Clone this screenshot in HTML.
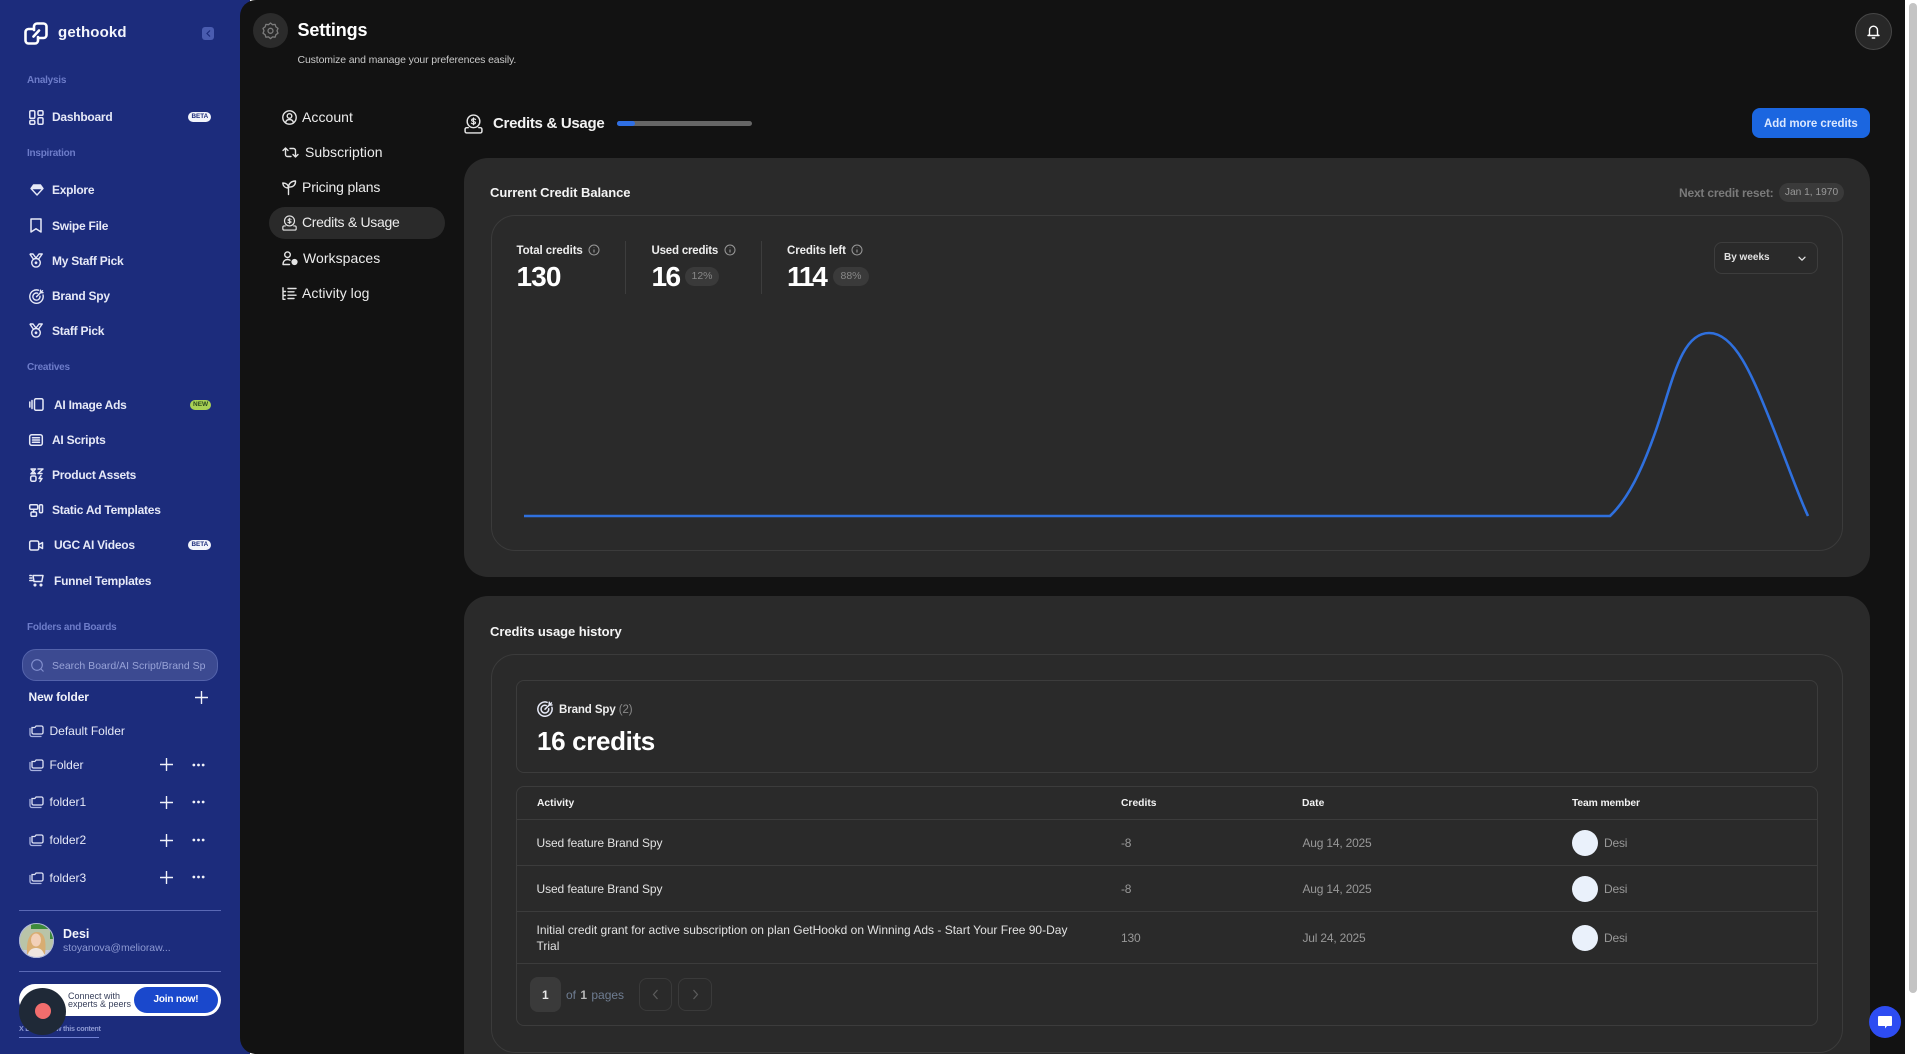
<!DOCTYPE html>
<html><head><meta charset="utf-8"><title>Settings</title>
<style>
html,body{margin:0;padding:0;width:1920px;height:1054px;overflow:hidden;background:#fff;font-family:"Liberation Sans",sans-serif}
#root{position:relative;width:1920px;height:1054px;overflow:hidden}
.a{position:absolute;box-sizing:border-box}
.t{position:absolute;line-height:0;white-space:nowrap;height:0}
.s{color:#e6e9f7;font-weight:700;font-size:12px;letter-spacing:-.25px;left:52px}
.h{color:#6d7cc9;font-weight:700;font-size:10px;letter-spacing:-.25px;left:27px}
.f{color:#e6e9f7;font-size:12px;left:49.500px}
.n{color:#ececec;font-size:14px;letter-spacing:.05px}
.lb{color:#eee;font-weight:700;font-size:11.500px;letter-spacing:-.1px}
.big{color:#fff;font-weight:700;font-size:28px}
.pill{background:#3a3a3a;border-radius:10px;color:#888;font-size:10.500px;text-align:center;line-height:19px;height:19px;top:267px}
.th{color:#f2f2f2;font-weight:700;font-size:10.300px}
.td{color:#e2e2e2;font-size:12px}
.m{color:#989898;font-size:12px;letter-spacing:-.2px}
.av{width:26px;height:26px;border-radius:50%;background:#eaf1fb;left:1572px}
.ln{height:1px;background:#3c3c3c;left:516px;width:1302px}
svg{position:absolute;overflow:visible;fill:none}
.w{stroke:#e6e9f7;stroke-width:1.500;stroke-linecap:round;stroke-linejoin:round}
.d{stroke:#e4e4e4;stroke-width:1.400;stroke-linecap:round;stroke-linejoin:round}
</style></head><body><div id="root">
<svg width="0" height="0"><defs>
<symbol id="folder" viewBox="0 0 15 14" overflow="visible"><path d="M3 3.500h2.800l1.300-1.500h5.400a1.500 1.500 0 0 1 1.500 1.500v5a1.500 1.500 0 0 1-1.500 1.500H4.500A1.500 1.500 0 0 1 3 8.500z" stroke="#dfe3f5" stroke-width="1.300" fill="none"/><path d="M1 4.500v6a2 2 0 0 0 2 2h9" stroke="#a9b3e0" stroke-width="1.300" fill="none" stroke-linecap="round"/></symbol>
<symbol id="plus" viewBox="0 0 14 14"><path d="M7 .5v13M.5 7h13" stroke="#f0f2fa" stroke-width="1.500" stroke-linecap="round"/></symbol>
<symbol id="dots" viewBox="0 0 14 4"><circle cx="2" cy="2" r="1.500" fill="#f0f2fa"/><circle cx="7" cy="2" r="1.500" fill="#f0f2fa"/><circle cx="12" cy="2" r="1.500" fill="#f0f2fa"/></symbol>
<symbol id="medal" viewBox="0 0 14 15"><g stroke="#e6e9f7" stroke-width="1.400" fill="none" stroke-linejoin="round"><path d="M.8 1h3.200l3 4 3-4h3.200l-3.500 5"/><path d="M.8 1l3.500 5"/><circle cx="7" cy="9.800" r="4.300"/></g><circle cx="7" cy="9.800" r="1.400" fill="#e6e9f7"/></symbol>
<symbol id="target" viewBox="0 0 15 15"><g stroke="#e6e9f7" stroke-width="1.400" fill="none" stroke-linecap="round"><path d="M9.500 1.200A6.700 6.700 0 1 0 14 6"/><path d="M8.600 4.200A3.600 3.600 0 1 0 11 7.200"/><path d="M7.500 7.700L13.500 1.800"/><path d="M11.500 1.200v2.500h2.500"/></g></symbol>
<symbol id="info" viewBox="0 0 12 12"><circle cx="6" cy="6" r="5" stroke="#999" fill="none"/><path d="M6 5.500v3M6 3.400v.4" stroke="#999" stroke-width="1.100"/></symbol>
<symbol id="coin" viewBox="0 0 18 19"><g stroke="currentColor" stroke-width="1.400" fill="none" stroke-linecap="round" stroke-linejoin="round"><circle cx="9" cy="7" r="6"/><path d="M4 13H2.500A1.500 1.500 0 0 0 1 14.500v2A1.500 1.500 0 0 0 2.500 18h13a1.500 1.500 0 0 0 1.500-1.500v-2A1.500 1.500 0 0 0 15.500 13H14"/><path d="M11 5.200C10.500 4.500 7.300 4.200 7.200 5.800 7.100 7.400 10.900 6.700 10.900 8.300 10.900 9.800 7.600 9.500 7 8.700M9 3.700v6.600" stroke-width="1.100"/></g></symbol>
</defs></svg>

<!-- sidebar -->
<div class="a" style="left:0;top:0;width:250px;height:1054px;background:#1c2c7c"></div>
<svg style="left:24px;top:22px" width="24" height="23" viewBox="0 0 24 23"><g stroke="#fff" stroke-width="2.600" stroke-linecap="round" stroke-linejoin="round"><path d="M9 7H4.500A3 3 0 0 0 1.500 10v8.500a3 3 0 0 0 3 3H11a3 3 0 0 0 3-3V15"/><path d="M15 16h4.500a3 3 0 0 0 3-3V4.500a3 3 0 0 0-3-3H13a3 3 0 0 0-3 3V8"/><path d="M9.500 14.500L15 8.500"/></g></svg>
<div class="t" style="left:58px;top:33px;color:#f3f5fc;font-weight:700;font-size:15px;letter-spacing:.15px">gethookd</div>
<div class="a" style="left:202px;top:27px;width:12px;height:13px;background:#4a5cb0;border-radius:3px"></div>
<svg style="left:204px;top:29px" width="8" height="9"><path d="M6 1.500L3 4.500l3 3" stroke="#1c2c7c" stroke-width="1.200"/></svg>

<div class="t h" style="top:81px">Analysis</div>
<svg class="w" style="left:29px;top:110px" width="15" height="15" viewBox="0 0 15 15"><rect x=".8" y=".8" width="5" height="7.500" rx="1.200"/><rect x="9" y=".8" width="5" height="4.500" rx="1.200"/><rect x=".8" y="10.500" width="5" height="3.700" rx="1.200"/><rect x="9" y="7.800" width="5" height="6.400" rx="1.200"/></svg>
<div class="t s" style="top:117px">Dashboard</div>
<div class="a" style="left:188px;top:112px;width:23px;height:10px;background:#f2f4fb;border-radius:5px"></div>
<div class="t" style="left:191.500px;top:117px;color:#1c2c7c;font-size:6.300px;font-weight:700">BETA</div>

<div class="t h" style="top:154px">Inspiration</div>
<svg class="w" style="left:30px;top:184px" width="14" height="12" viewBox="0 0 14 12"><path d="M3.500 1h7L13 4.500 7 11 1 4.500zM1.500 4.500h11" stroke-width="1.400"/><path d="M3.500 1h7L12.500 4H1.500z" fill="#e6e9f7" stroke="none"/></svg>
<div class="t s" style="top:190px">Explore</div>
<svg class="w" style="left:30px;top:218px" width="12" height="15" viewBox="0 0 12 15"><path d="M1 1h10v13L6 10.800 1 14z"/></svg>
<div class="t s" style="top:226px">Swipe File</div>
<svg style="left:29px;top:253px" width="14" height="15"><use href="#medal"/></svg>
<div class="t s" style="top:261px">My Staff Pick</div>
<svg style="left:29px;top:289px" width="15" height="15"><use href="#target"/></svg>
<div class="t s" style="top:296px">Brand Spy</div>
<svg style="left:29px;top:323px" width="14" height="15"><use href="#medal"/></svg>
<div class="t s" style="top:331px">Staff Pick</div>

<div class="t h" style="top:368px">Creatives</div>
<svg class="w" style="left:29px;top:398px" width="15" height="13" viewBox="0 0 15 13"><rect x="5.500" y=".7" width="8.500" height="11.600" rx="1.500"/><path d="M3 2.500v8M.8 4v5"/></svg>
<div class="t s" style="left:54px;top:405px">AI Image Ads</div>
<div class="a" style="left:190px;top:400px;width:21px;height:10px;background:#a9d154;border-radius:5px"></div>
<div class="t" style="left:193px;top:405px;color:#2b4a20;font-size:6.500px;font-weight:700">NEW</div>
<svg class="w" style="left:29px;top:434px" width="14" height="12" viewBox="0 0 14 12" stroke-width="1.200"><rect x=".7" y=".7" width="12.600" height="10.600" rx="2"/><path d="M3.500 3.800h7M3.500 6h7M3.500 8.200h7"/></svg>
<div class="t s" style="top:440px">AI Scripts</div>
<svg class="w" style="left:30px;top:468px" width="14" height="14" viewBox="0 0 14 14" stroke-width="1.100"><rect x=".7" y="8" width="5.300" height="5.300" rx="1.500"/><path d="M1 1h4.500L1 5.800h4.500L1 1M8 1h5L8 5.500h4"/><path d="M11 7.500L9 10.500h3L10 13.500"/></svg>
<div class="t s" style="top:475px">Product Assets</div>
<svg class="w" style="left:29px;top:504px" width="14" height="13" viewBox="0 0 14 13" stroke-width="1.100"><rect x=".7" y=".7" width="8" height="4.500" rx="1.200"/><rect x="2" y="8" width="5.500" height="4.300" rx="1.200"/><rect x="10.500" y=".7" width="3" height="8" rx="1.200"/><path d="M4.700 5.200V8"/></svg>
<div class="t s" style="top:510px">Static Ad Templates</div>
<svg class="w" style="left:29px;top:540px" width="15" height="11" viewBox="0 0 15 11" stroke-width="1.100"><rect x=".7" y="1" width="9" height="9" rx="1.500"/><path d="M10 4.500l3.500-2v6l-3.500-2"/></svg>
<div class="t s" style="left:54px;top:545px">UGC AI Videos</div>
<div class="a" style="left:188px;top:540px;width:23px;height:10px;background:#f2f4fb;border-radius:5px"></div>
<div class="t" style="left:191.500px;top:545px;color:#1c2c7c;font-size:6.300px;font-weight:700">BETA</div>
<svg class="w" style="left:29px;top:574px" width="15" height="13" viewBox="0 0 15 13" stroke-width="1.100"><path d="M4 1.500h10l-1.200 6H5L4 1.500M.8 1.500h1.500M.8 4h2M.8 6.500h3"/><circle cx="6" cy="11" r=".8"/><circle cx="12" cy="11" r=".8"/></svg>
<div class="t s" style="left:54px;top:581px">Funnel Templates</div>

<div class="t h" style="top:628px">Folders and Boards</div>
<div class="a" style="left:22px;top:649px;width:196px;height:32px;border-radius:14px;background:#3c4a91;border:1px solid #5463ab"></div>
<svg style="left:31px;top:659px" width="13" height="13" viewBox="0 0 13 13"><circle cx="6" cy="6" r="5.300" stroke="#8390cf" stroke-width="1.100"/><path d="M10 10l2.500 2.500" stroke="#8390cf" stroke-width="1.100"/></svg>
<div class="t" style="left:52px;top:666px;width:153px;color:#98a3d8;font-size:10.500px;clip-path:inset(-8px 0 -8px 0)">Search Board/AI Script/Brand Spy</div>
<div class="t" style="left:28.500px;top:697px;color:#f0f2fa;font-weight:700;font-size:12px;letter-spacing:-.1px">New folder</div>
<svg style="left:195px;top:691px" width="13" height="13"><use href="#plus"/></svg>

<svg style="left:29px;top:724px" width="15" height="14"><use href="#folder"/></svg>
<div class="t f" style="top:731px">Default Folder</div>
<svg style="left:29px;top:758px" width="15" height="14"><use href="#folder"/></svg>
<div class="t f" style="top:765px">Folder</div>
<svg style="left:160px;top:758px" width="13" height="13"><use href="#plus"/></svg>
<svg style="left:192px;top:763px" width="13" height="4"><use href="#dots"/></svg>
<svg style="left:29px;top:795px" width="15" height="14"><use href="#folder"/></svg>
<div class="t f" style="top:802px">folder1</div>
<svg style="left:160px;top:796px" width="13" height="13"><use href="#plus"/></svg>
<svg style="left:192px;top:800px" width="13" height="4"><use href="#dots"/></svg>
<svg style="left:29px;top:833px" width="15" height="14"><use href="#folder"/></svg>
<div class="t f" style="top:840px">folder2</div>
<svg style="left:160px;top:834px" width="13" height="13"><use href="#plus"/></svg>
<svg style="left:192px;top:838px" width="13" height="4"><use href="#dots"/></svg>
<svg style="left:29px;top:871px" width="15" height="14"><use href="#folder"/></svg>
<div class="t f" style="top:878px">folder3</div>
<svg style="left:160px;top:871px" width="13" height="13"><use href="#plus"/></svg>
<svg style="left:192px;top:875px" width="13" height="4"><use href="#dots"/></svg>

<div class="a" style="left:19px;top:910px;width:202px;height:1px;background:#5a69b5"></div>
<svg style="left:19px;top:923px" width="35" height="35" viewBox="0 0 35 35"><defs><clipPath id="cp"><circle cx="17.500" cy="17.500" r="17.500"/></clipPath></defs><g clip-path="url(#cp)"><rect width="35" height="35" fill="#b9c4a8"/><path d="M12 0h23v16h-4V6H12z" fill="#3d8a3a"/><rect x="0" y="27" width="35" height="8" fill="#c5c9e0"/><path d="M8 31C7 15 12 9 18 9s10 6 8 22z" fill="#d8ad72"/><ellipse cx="17" cy="17" rx="5" ry="6.500" fill="#f2d0b8"/><path d="M8 35c1-8 5-10 9-10s8 2 9 10z" fill="#efe6df"/></g><circle cx="17.500" cy="17.500" r="17" stroke="#aeb6da" stroke-width="1"/></svg>
<div class="t" style="left:63px;top:934px;color:#f3f5fc;font-weight:700;font-size:12.500px">Desi</div>
<div class="t" style="left:63px;top:948px;color:#8d99d2;font-size:10.500px;letter-spacing:-.05px">stoyanova@melioraw...</div>
<div class="a" style="left:19px;top:971px;width:202px;height:1px;background:#5a69b5"></div>

<div class="a" style="left:19px;top:984px;width:202px;height:32px;background:#fff;border-radius:16px"></div>
<div class="t" style="left:68px;top:996px;color:#39415c;font-size:9px">Connect with</div>
<div class="t" style="left:68px;top:1004px;color:#39415c;font-size:9px">experts &amp; peers</div>
<div class="a" style="left:134px;top:987px;width:84px;height:26px;background:#1a48cc;border-radius:13px"></div>
<div class="t" style="left:153.500px;top:1000px;color:#fff;font-weight:700;font-size:10px;letter-spacing:-.2px">Join now!</div>
<div class="t" style="left:19px;top:1029px;color:#8d99d2;font-size:7.200px;font-weight:700;letter-spacing:-.25px">X Don't show this content</div>
<div class="a" style="left:19px;top:1037px;width:80px;height:1px;background:#7080d4"></div>
<div class="a" style="left:19px;top:988px;width:47px;height:47px;border-radius:50%;background:#1f2937"></div>
<div class="a" style="left:35px;top:1003px;width:16px;height:16px;border-radius:50%;background:#f26d6d"></div>

<!-- main -->
<div class="a" style="left:240px;top:0;width:1665px;height:1054px;background:#121212;border-radius:16px 0 0 16px"></div>
<div class="a" style="left:1905px;top:0;width:15px;height:1054px;background:#fff"></div>
<div class="a" style="left:1909px;top:3px;width:8px;height:990px;background:#c4c4c4;border-radius:4px"></div>

<div class="a" style="left:253px;top:13px;width:35px;height:35px;border-radius:50%;background:#2b2b2b"></div>
<svg style="left:262px;top:22px" width="17" height="18" viewBox="0 0 17 18"><path d="M8.500 1l2 1.700 2.600-.3.800 2.500 2.100 1.500-1 2.400 1 2.400-2.100 1.500-.8 2.500-2.600-.3-2 1.700-2-1.700-2.600.3-.8-2.500L1 11.200l1-2.400-1-2.400 2.100-1.500.8-2.500 2.600.3z" stroke="#7c7c7c" stroke-width="1.300" stroke-linejoin="round"/><circle cx="8.500" cy="8.800" r="2.500" stroke="#7c7c7c" stroke-width="1.300"/></svg>
<div class="t" style="left:297.500px;top:30px;color:#fff;font-weight:700;font-size:18px;letter-spacing:-.15px">Settings</div>
<div class="t" style="left:297.500px;top:60px;color:#c9c9c9;font-size:10.500px;letter-spacing:-.13px">Customize and manage your preferences easily.</div>

<svg class="d" style="left:282px;top:110px" width="15" height="15" viewBox="0 0 15 15"><circle cx="7.500" cy="7.500" r="6.700"/><circle cx="7.500" cy="6" r="2.300"/><path d="M3.500 12.500c.6-2 2-3 4-3s3.400 1 4 3"/></svg>
<div class="t n" style="left:302px;top:117px">Account</div>
<svg class="d" style="left:282px;top:146px" width="17" height="13" viewBox="0 0 17 13"><path d="M1 4.500L3.500 2 6 4.500M3.500 2.500v6a2 2 0 0 0 2 2H9M16 8.500L13.500 11 11 8.500M13.500 10.500v-6a2 2 0 0 0-2-2H8"/></svg>
<div class="t n" style="left:305px;top:152px">Subscription</div>
<svg class="d" style="left:282px;top:180px" width="15" height="15" viewBox="0 0 15 15"><path d="M6.500 14.500C6.500 11 6.500 8 6.500 7M6.500 8C3 8 1 6 .8 3c3 0 5.700 1.500 5.700 5M6.500 7c.2-3.500 3-6 7-6 .2 3.500-2 6.500-7 6z"/></svg>
<div class="t n" style="left:302px;top:187px;letter-spacing:-.15px">Pricing plans</div>
<div class="a" style="left:269px;top:207px;width:176px;height:32px;background:#2a2a2a;border-radius:16px"></div>
<svg style="left:282px;top:215px;color:#e4e4e4" width="15" height="16"><use href="#coin"/></svg>
<div class="t n" style="left:302px;top:222px;letter-spacing:-.3px">Credits &amp; Usage</div>
<svg class="d" style="left:282px;top:251px" width="16" height="15" viewBox="0 0 16 15"><circle cx="5.500" cy="3.700" r="2.800"/><path d="M1 13.500c0-3.500 2-5 4.500-5 1 0 1.800.2 2.500.7M1 13.500h6.500"/><circle cx="12.500" cy="11" r="2.400" fill="#e4e4e4"/></svg>
<div class="t n" style="left:303px;top:258px">Workspaces</div>
<svg class="d" style="left:282px;top:287px" width="15" height="13" viewBox="0 0 15 13"><path d="M1 .8v11.500h2M1 4.500h2.500M1 8.500h2.500M6 1.500h8M6 4.800h6M6 8.200h8M6 11.500h6"/></svg>
<div class="t n" style="left:302px;top:293px">Activity log</div>

<svg style="left:464px;top:114px;color:#e8e8e8" width="19" height="20"><use href="#coin"/></svg>
<div class="t" style="left:493px;top:124px;color:#f2f2f2;font-weight:700;font-size:15px;letter-spacing:-.3px">Credits &amp; Usage</div>
<div class="a" style="left:617px;top:121px;width:135px;height:5px;background:#666;border-radius:3px"></div>
<div class="a" style="left:617px;top:121px;width:18px;height:5px;background:#2f6fe4;border-radius:3px"></div>
<div class="a" style="left:1752px;top:108px;width:118px;height:30px;background:#1b66e0;border-radius:8px"></div>
<div class="t" style="left:1764px;top:124px;color:#dbe8ff;font-weight:700;font-size:11.500px;letter-spacing:-.05px">Add more credits</div>
<div class="a" style="left:1855px;top:13px;width:37px;height:37px;border-radius:50%;background:#282828;border:1px solid #474747"></div>
<svg style="left:1867px;top:24px" width="13" height="15" viewBox="0 0 13 15"><path d="M2.500 10.500V6.200a4 4 0 0 1 8 0v4.300l1.500 1H1z" stroke="#fff" stroke-width="1.400" stroke-linejoin="round"/><path d="M5.300 14h2.400" stroke="#fff" stroke-width="1.400" stroke-linecap="round"/></svg>

<!-- card 1 -->
<div class="a" style="left:464px;top:158px;width:1406px;height:419px;background:#2a2a2a;border-radius:24px"></div>
<div class="t" style="left:490px;top:193px;color:#f5f5f5;font-weight:700;font-size:13px;letter-spacing:-.05px">Current Credit Balance</div>
<div class="t" style="left:1679px;top:193px;color:#7a7a7a;font-weight:700;font-size:12px;letter-spacing:-.2px">Next credit reset:</div>
<div class="a" style="left:1779px;top:183px;width:65px;height:19px;background:#3a3a3a;border-radius:10px;color:#999;font-size:10.200px;text-align:center;line-height:19px">Jan 1, 1970</div>
<div class="a" style="left:490.500px;top:215px;width:1352.500px;height:336px;border:1px solid #3b3b3b;border-radius:24px"></div>

<div class="t lb" style="left:516.500px;top:251px">Total credits</div>
<svg style="left:588px;top:244px" width="12" height="12"><use href="#info"/></svg>
<div class="t big" style="left:516.500px;top:277px;letter-spacing:-.9px">130</div>
<div class="a" style="left:625px;top:241px;width:1px;height:53px;background:#3d3d3d"></div>
<div class="t lb" style="left:651.500px;top:251px;letter-spacing:-.2px">Used credits</div>
<svg style="left:724px;top:244px" width="12" height="12"><use href="#info"/></svg>
<div class="t big" style="left:651.500px;top:277px;letter-spacing:-1.600px">16</div>
<div class="a pill" style="left:685px;width:34px">12%</div>
<div class="a" style="left:761px;top:241px;width:1px;height:53px;background:#3d3d3d"></div>
<div class="t lb" style="left:787px;top:251px">Credits left</div>
<svg style="left:851px;top:244px" width="12" height="12"><use href="#info"/></svg>
<div class="t big" style="left:787px;top:277px;letter-spacing:-2.200px">114</div>
<div class="a pill" style="left:833px;width:36px">88%</div>

<div class="a" style="left:1714px;top:242px;width:104px;height:32px;border:1px solid #3d3d3d;border-radius:8px"></div>
<div class="t" style="left:1724px;top:258px;color:#e2e2e2;font-weight:700;font-size:10px">By weeks</div>
<svg style="left:1798px;top:256px" width="8" height="6" viewBox="0 0 8 6"><path d="M1 1.200l3 3 3-3" stroke="#e2e2e2" stroke-width="1.300" stroke-linecap="round" stroke-linejoin="round"/></svg>

<svg style="left:0;top:0" width="1920" height="1054"><path d="M524 516H1610C1628 499 1642 470 1655 433C1672 385 1680 333 1709 333C1735 333 1752 375 1772 425C1786 460 1797 492 1808 516" stroke="#2f70de" stroke-width="2.600"/></svg>

<!-- card 2 -->
<div class="a" style="left:464px;top:596px;width:1406px;height:520px;background:#2a2a2a;border-radius:24px"></div>
<div class="t" style="left:490px;top:632px;color:#f5f5f5;font-weight:700;font-size:13px;letter-spacing:-.06px">Credits usage history</div>
<div class="a" style="left:490.500px;top:654px;width:1352.500px;height:399px;border:1px solid #3b3b3b;border-radius:24px"></div>
<div class="a" style="left:516px;top:680px;width:1302px;height:93px;border:1px solid #3c3c3c;border-radius:8px"></div>
<svg style="left:537px;top:701px" width="16" height="16"><use href="#target"/></svg>
<div class="t" style="left:559px;top:710px;color:#eee;font-weight:700;font-size:11.500px;letter-spacing:-.1px">Brand Spy <span style="font-weight:400;color:#8a8a8a">(2)</span></div>
<div class="t" style="left:537px;top:741px;color:#fff;font-weight:700;font-size:26px;letter-spacing:-.35px">16 credits</div>

<div class="a" style="left:516px;top:786px;width:1302px;height:240px;border:1px solid #3c3c3c;border-radius:8px"></div>
<div class="a ln" style="top:819px"></div>
<div class="a ln" style="top:865px"></div>
<div class="a ln" style="top:911px"></div>
<div class="a ln" style="top:963px"></div>
<div class="t th" style="left:537px;top:804px">Activity</div>
<div class="t th" style="left:1121px;top:804px">Credits</div>
<div class="t th" style="left:1302px;top:804px">Date</div>
<div class="t th" style="left:1572px;top:804px;letter-spacing:-.1px">Team member</div>

<div class="t td" style="left:536.500px;top:843px;letter-spacing:-.1px">Used feature Brand Spy</div>
<div class="t m" style="left:1121px;top:843px">-8</div>
<div class="t m" style="left:1302.500px;top:843px">Aug 14, 2025</div>
<div class="a av" style="top:830px"></div>
<div class="t m" style="left:1604px;top:843px">Desi</div>

<div class="t td" style="left:536.500px;top:889px;letter-spacing:-.1px">Used feature Brand Spy</div>
<div class="t m" style="left:1121px;top:889px">-8</div>
<div class="t m" style="left:1302.500px;top:889px">Aug 14, 2025</div>
<div class="a av" style="top:876px"></div>
<div class="t m" style="left:1604px;top:889px">Desi</div>

<div class="t td" style="left:536.500px;top:930px">Initial credit grant for active subscription on plan GetHookd on Winning Ads - Start Your Free 90-Day</div>
<div class="t td" style="left:536.500px;top:946px">Trial</div>
<div class="t m" style="left:1121px;top:938px">130</div>
<div class="t m" style="left:1302.500px;top:938px">Jul 24, 2025</div>
<div class="a av" style="top:925px"></div>
<div class="t m" style="left:1604px;top:938px">Desi</div>

<div class="a" style="left:530px;top:977px;width:31px;height:35px;background:#3a3a3a;border-radius:8px"></div>
<div class="t" style="left:542px;top:995px;color:#e8e8e8;font-weight:700;font-size:12px">1</div>
<div class="t" style="left:566px;top:995px;color:#6f7d92;font-size:12px">of <span style="color:#b8b8b8;font-weight:700;margin:0 1px">1</span> pages</div>
<div class="a" style="left:639px;top:978px;width:33px;height:33px;border:1px solid #3a3a3a;border-radius:8px"></div>
<div class="a" style="left:678px;top:978px;width:34px;height:33px;border:1px solid #3a3a3a;border-radius:8px"></div>
<svg style="left:652px;top:989px" width="7" height="11" viewBox="0 0 7 11"><path d="M5.500 1L1.500 5.500l4 4.500" stroke="#5c5c5c" stroke-width="1.200"/></svg>
<svg style="left:692px;top:989px" width="7" height="11" viewBox="0 0 7 11"><path d="M1.500 1l4 4.500-4 4.500" stroke="#5c5c5c" stroke-width="1.200"/></svg>

<div class="a" style="left:1869px;top:1006px;width:32px;height:32px;border-radius:50%;background:#2d4cf2"></div>
<svg style="left:1877px;top:1015px" width="16" height="15" viewBox="0 0 16 15"><path d="M2 1h12a1 1 0 0 1 1 1v8a1 1 0 0 1-1 1h-4l-2 2.500V11H2a1 1 0 0 1-1-1V2a1 1 0 0 1 1-1z" fill="#fff"/></svg>
</div></body></html>
